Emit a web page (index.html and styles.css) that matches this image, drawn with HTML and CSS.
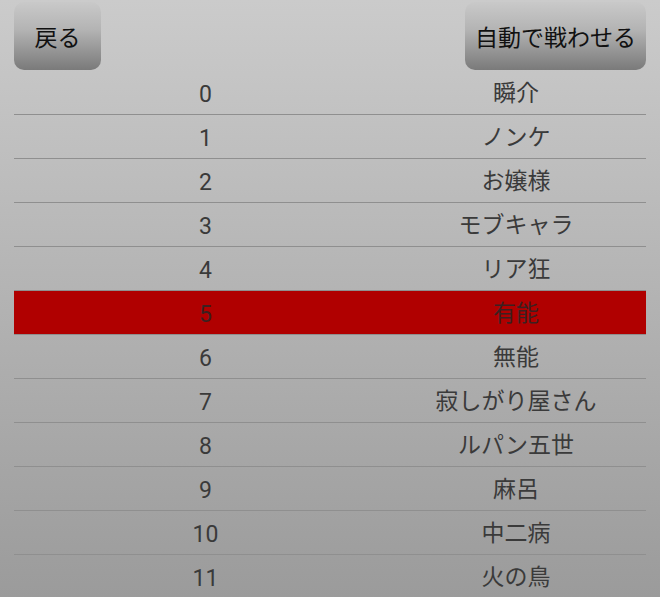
FILE: index.html
```html
<!DOCTYPE html>
<html>
<head>
    <title>キャラ選択</title>
    <link rel="stylesheet" href="styles.css">
</head>
<body>
    <div class="screen">
        <div class="topBar">
            <button class="btn">戻る</button>
            <button class="btn">自動で戦わせる</button>
        </div>

        <div class="list">
            <div class="row"><span class="num">0</span><span class="name">瞬介</span></div>
            <div class="row"><span class="num">1</span><span class="name">ノンケ</span></div>
            <div class="row"><span class="num">2</span><span class="name">お嬢様</span></div>
            <div class="row"><span class="num">3</span><span class="name">モブキャラ</span></div>
            <div class="row"><span class="num">4</span><span class="name">リア狂</span></div>
            <div class="row selected"><span class="num">5</span><span class="name">有能</span></div>
            <div class="row"><span class="num">6</span><span class="name">無能</span></div>
            <div class="row"><span class="num">7</span><span class="name">寂しがり屋さん</span></div>
            <div class="row"><span class="num">8</span><span class="name">ルパン五世</span></div>
            <div class="row"><span class="num">9</span><span class="name">麻呂</span></div>
            <div class="row"><span class="num">10</span><span class="name">中二病</span></div>
            <div class="row"><span class="num">11</span><span class="name">火の鳥</span></div>
        </div>
    </div>
</body>
</html>
```

FILE: styles.css
```css
*{
    padding: 0;
    margin: 0;
    box-sizing: border-box;
    font-family: Roboto, 'Noto Sans CJK JP', sans-serif;
}

body{
    height: 597px;
    overflow: hidden;
    background: linear-gradient(#cbcbcb, #9b9b9b);
}

.screen{
    padding: 0 14px;
}

.topBar{
    display: flex;
    justify-content: space-between;
    padding-top: 2px;
    height: 71px;
}

.btn{
    border: 0;
    height: 68px;
    min-width: 87px;
    padding: 0 10px;
    border-radius: 10px;
    background: linear-gradient(#c9c9c9, #b4b4b4 40%, #7a7a7a);
    color: #111;
    font-size: 23px;
}

.row{
    display: grid;
    grid-template-columns: 383px 1fr;
    align-items: center;
    height: 44px;
    border-bottom: 1px solid #8f8f8f;
    color: #3a3a3a;
    font-size: 23px;
}

.row .num{
    text-align: center;
    padding-top: 3px;
}

.row .name{
    text-align: center;
    padding-right: 11px;
    padding-bottom: 3px;
}

.row.selected{
    background-color: #b00000;
    color: #3c2020;
}
```
